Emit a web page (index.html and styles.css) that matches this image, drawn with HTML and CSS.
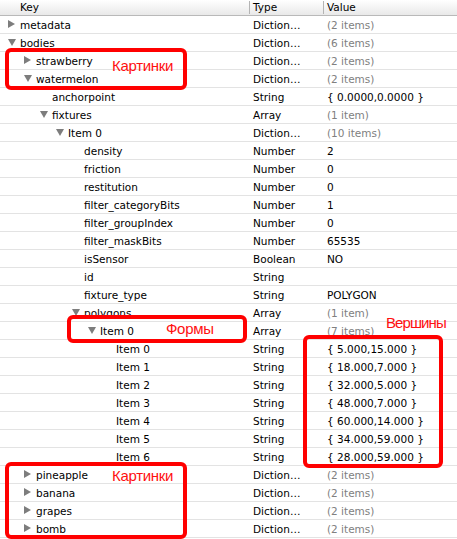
FILE: index.html
```html
<!DOCTYPE html>
<html>
<head>
<meta charset="utf-8">
<link rel="stylesheet" href="styles.css">
</head>
<body>
<div class="page">
  <div class="head">
    <div class="hc hkey">Key</div>
    <div class="hc htype">Type</div>
    <div class="hc hval">Value</div>
  </div>
  <div class="rows">
    <div class="row"><div class="key l0"><span class="tri right"></span>metadata</div><div class="type">Diction…</div><div class="val dim">(2 items)</div></div>
    <div class="row"><div class="key l0"><span class="tri down"></span>bodies</div><div class="type">Diction…</div><div class="val dim">(6 items)</div></div>
    <div class="row"><div class="key l1"><span class="tri right"></span>strawberry</div><div class="type">Diction…</div><div class="val dim">(2 items)</div></div>
    <div class="row"><div class="key l1"><span class="tri down"></span>watermelon</div><div class="type">Diction…</div><div class="val dim">(2 items)</div></div>
    <div class="row"><div class="key l2"><span class="tri"></span>anchorpoint</div><div class="type">String</div><div class="val">{ 0.0000,0.0000 }</div></div>
    <div class="row"><div class="key l2"><span class="tri down"></span>fixtures</div><div class="type">Array</div><div class="val dim">(1 item)</div></div>
    <div class="row"><div class="key l3"><span class="tri down"></span>Item 0</div><div class="type">Diction…</div><div class="val dim">(10 items)</div></div>
    <div class="row"><div class="key l4"><span class="tri"></span>density</div><div class="type">Number</div><div class="val">2</div></div>
    <div class="row"><div class="key l4"><span class="tri"></span>friction</div><div class="type">Number</div><div class="val">0</div></div>
    <div class="row"><div class="key l4"><span class="tri"></span>restitution</div><div class="type">Number</div><div class="val">0</div></div>
    <div class="row"><div class="key l4"><span class="tri"></span>filter_categoryBits</div><div class="type">Number</div><div class="val">1</div></div>
    <div class="row"><div class="key l4"><span class="tri"></span>filter_groupIndex</div><div class="type">Number</div><div class="val">0</div></div>
    <div class="row"><div class="key l4"><span class="tri"></span>filter_maskBits</div><div class="type">Number</div><div class="val">65535</div></div>
    <div class="row"><div class="key l4"><span class="tri"></span>isSensor</div><div class="type">Boolean</div><div class="val">NO</div></div>
    <div class="row"><div class="key l4"><span class="tri"></span>id</div><div class="type">String</div><div class="val"></div></div>
    <div class="row"><div class="key l4"><span class="tri"></span>fixture_type</div><div class="type">String</div><div class="val">POLYGON</div></div>
    <div class="row"><div class="key l4"><span class="tri down"></span>polygons</div><div class="type">Array</div><div class="val dim">(1 item)</div></div>
    <div class="row"><div class="key l5"><span class="tri down"></span>Item 0</div><div class="type">Array</div><div class="val dim">(7 items)</div></div>
    <div class="row"><div class="key l6"><span class="tri"></span>Item 0</div><div class="type">String</div><div class="val">{ 5.000,15.000 }</div></div>
    <div class="row"><div class="key l6"><span class="tri"></span>Item 1</div><div class="type">String</div><div class="val">{ 18.000,7.000 }</div></div>
    <div class="row"><div class="key l6"><span class="tri"></span>Item 2</div><div class="type">String</div><div class="val">{ 32.000,5.000 }</div></div>
    <div class="row"><div class="key l6"><span class="tri"></span>Item 3</div><div class="type">String</div><div class="val">{ 48.000,7.000 }</div></div>
    <div class="row"><div class="key l6"><span class="tri"></span>Item 4</div><div class="type">String</div><div class="val">{ 60.000,14.000 }</div></div>
    <div class="row"><div class="key l6"><span class="tri"></span>Item 5</div><div class="type">String</div><div class="val">{ 34.000,59.000 }</div></div>
    <div class="row"><div class="key l6"><span class="tri"></span>Item 6</div><div class="type">String</div><div class="val">{ 28.000,59.000 }</div></div>
    <div class="row"><div class="key l1"><span class="tri right"></span>pineapple</div><div class="type">Diction…</div><div class="val dim">(2 items)</div></div>
    <div class="row"><div class="key l1"><span class="tri right"></span>banana</div><div class="type">Diction…</div><div class="val dim">(2 items)</div></div>
    <div class="row"><div class="key l1"><span class="tri right"></span>grapes</div><div class="type">Diction…</div><div class="val dim">(2 items)</div></div>
    <div class="row"><div class="key l1"><span class="tri right"></span>bomb</div><div class="type">Diction…</div><div class="val dim">(2 items)</div></div>
  </div>

  <div class="mark box-top"></div>
  <div class="note note-top">Картинки</div>
  <div class="mark box-shape"></div>
  <div class="note note-shape">Формы</div>
  <div class="mark box-verts"></div>
  <div class="note note-verts">Вершины</div>
  <div class="mark box-bottom"></div>
  <div class="note note-bottom">Картинки</div>
</div>
</body>
</html>
```

FILE: styles.css
```css
html, body {
  margin: 0;
  padding: 0;
  background: #fff;
}

.page {
  position: relative;
  width: 457px;
  height: 539px;
  overflow: hidden;
  font-family: "DejaVu Sans", "Liberation Sans", sans-serif;
  font-size: 10.5px;
  color: #000;
}

.head {
  display: grid;
  grid-template-columns: 250px 74px 1fr;
  height: 16px;
  box-sizing: border-box;
  border-bottom: 1px solid #b9b9b9;
  background: linear-gradient(#ffffff, #e9e9e9);
}

.hc {
  display: flex;
  align-items: center;
  line-height: 15px;
}

.hkey { padding-left: 20px; }
.htype, .hval {
  padding-left: 3px;
  border-left: 1px solid #b4b4b4;
  margin: 1px 0 1px -1px;
  line-height: 13px;
}

.rows {
  display: flex;
  flex-direction: column;
}

.row {
  display: grid;
  grid-template-columns: 250px 74px 1fr;
  height: 18px;
  box-sizing: border-box;
  border-bottom: 1px solid #e3e3e3;
  align-items: center;
}

.key {
  display: flex;
  align-items: center;
  white-space: nowrap;
}

.l0 { padding-left: 8px; }
.l1 { padding-left: 24px; }
.l2 { padding-left: 40px; }
.l3 { padding-left: 56px; }
.l4 { padding-left: 72px; }
.l5 { padding-left: 88px; }
.l6 { padding-left: 104px; }

.tri {
  width: 12px;
  height: 9px;
  flex: none;
  position: relative;
}

.tri.right::before {
  content: "";
  position: absolute;
  left: 0;
  top: 0;
  border-left: 7px solid #7d7d7d;
  border-top: 4.5px solid transparent;
  border-bottom: 4.5px solid transparent;
}

.tri.down::before {
  content: "";
  position: absolute;
  left: 0;
  top: 1px;
  border-top: 7px solid #7d7d7d;
  border-left: 4.5px solid transparent;
  border-right: 4.5px solid transparent;
}

.type {
  padding-left: 3px;
  white-space: nowrap;
}

.val {
  padding-left: 3px;
  white-space: nowrap;
}

.dim { color: #808080; }

.mark {
  position: absolute;
  box-sizing: border-box;
  border: 4px solid #ff0000;
  border-radius: 6px;
}

.box-top { left: 5px; top: 48px; width: 182px; height: 42px; }
.box-shape { left: 67px; top: 315px; width: 180px; height: 28px; }
.box-verts { left: 303px; top: 335px; width: 140px; height: 133px; }
.box-bottom { left: 5px; top: 462px; width: 182px; height: 77px; }

.note {
  position: absolute;
  color: #ff1010;
  font-family: "Liberation Sans", "DejaVu Sans", sans-serif;
  font-size: 15px;
  line-height: 16px;
  white-space: nowrap;
  letter-spacing: -0.3px;
}

.note-top { left: 112px; top: 58px; }
.note-shape { left: 166px; top: 321px; }
.note-verts { left: 386px; top: 315px; letter-spacing: -0.9px; }
.note-bottom { left: 112px; top: 468px; }
```
